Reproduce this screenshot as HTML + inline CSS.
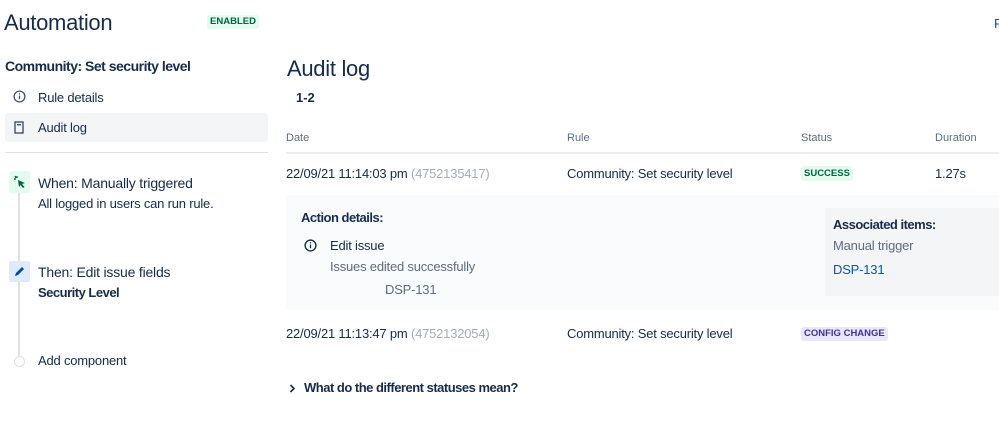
<!DOCTYPE html>
<html><head><meta charset="utf-8"><style>
*{margin:0;padding:0;box-sizing:border-box}
body{width:999px;height:424px;overflow:hidden;background:#fff;font-family:"Liberation Sans",sans-serif;color:#172b4d;position:relative}
.a{position:absolute;white-space:nowrap}
.t{font-size:13px;letter-spacing:-0.2px}
.g{color:#a5adba}
.b{font-weight:bold;letter-spacing:-0.5px}
</style></head><body>
<div class="a" style="left:4px;top:10px;font-size:22px;letter-spacing:-0.3px">Automation</div>
<div class="a" style="left:207px;top:15px;width:52px;height:14px;background:#e3fcef;color:#006644;font-size:9.5px;font-weight:bold;text-align:center;line-height:14px;border-radius:3px">ENABLED</div>
<div class="a" style="left:994px;top:16px;font-size:13px;color:#0052cc">R</div>

<div class="a" style="left:5px;top:58px;font-size:14px;font-weight:bold;letter-spacing:-0.5px;color:#172b4d">Community: Set security level</div>
<svg class="a" style="left:13px;top:90px" width="13" height="13" viewBox="0 0 14 14"><circle cx="7" cy="7" r="5.8" fill="none" stroke="#42526e" stroke-width="1.4"/><rect x="6.3" y="6" width="1.4" height="4" fill="#42526e"/><circle cx="7" cy="4.2" r=".8" fill="#42526e"/></svg>
<div class="a t" style="left:38px;top:90px">Rule details</div>
<div class="a" style="left:5px;top:113px;width:263px;height:29px;background:#f4f5f7;border-radius:3px"></div>
<svg class="a" style="left:14px;top:121px" width="10" height="13" viewBox="0 0 10 13"><rect x="1" y="1" width="8" height="11" fill="none" stroke="#42526e" stroke-width="1.4"/><rect x="3" y="3" width="4" height="1.4" fill="#42526e"/></svg>
<div class="a t" style="left:38px;top:120px">Audit log</div>
<div class="a" style="left:5px;top:152px;width:263px;height:1px;background:#dfe1e6"></div>

<div class="a" style="left:18px;top:193px;width:2px;height:163px;background:#dfe1e6"></div>
<div class="a" style="left:9px;top:171px;width:21px;height:22px;background:#e3fcef;border-radius:2px"></div>
<svg class="a" style="left:12px;top:175px" width="15" height="14" viewBox="0 0 15 14"><path d="M6 5 L13 8 L10 9 L12.5 12 L11 13 L8.5 10 L7 12 Z" fill="#006644"/><path d="M2 4 L4 4 M3 1 L4 3 M5 1 L5 3" stroke="#006644" stroke-width="1.3"/></svg>
<div class="a" style="left:38px;top:175px;font-size:14px;letter-spacing:-0.2px">When: Manually triggered</div>
<div class="a t" style="left:38px;top:196px">All logged in users can run rule.</div>
<div class="a" style="left:9px;top:261px;width:21px;height:21px;background:#deebff;border-radius:2px"></div>
<svg class="a" style="left:13px;top:265px" width="13" height="13" viewBox="0 0 13 13"><path d="M2 11 L3 8 L9 2 L11 4 L5 10 Z" fill="#0747a6"/></svg>
<div class="a" style="left:38px;top:264px;font-size:14px;letter-spacing:-0.2px">Then: Edit issue fields</div>
<div class="a t b" style="left:38px;top:285px">Security Level</div>
<div class="a" style="left:14px;top:356px;width:11px;height:11px;border:1px solid #dfe1e6;border-radius:50%;background:#fff"></div>
<div class="a t" style="left:38px;top:353px">Add component</div>

<div class="a" style="left:287px;top:56px;font-size:22px;letter-spacing:-0.3px">Audit log</div>
<div class="a" style="left:296px;top:90px;font-size:13px;font-weight:bold">1-2</div>
<div class="a" style="left:286px;top:132px;font-size:11px;color:#5e6c84">Date</div>
<div class="a" style="left:567px;top:132px;font-size:11px;color:#5e6c84">Rule</div>
<div class="a" style="left:801px;top:132px;font-size:11px;color:#5e6c84">Status</div>
<div class="a" style="left:935px;top:132px;font-size:11px;color:#5e6c84">Duration</div>
<div class="a" style="left:286px;top:152px;width:713px;height:2px;background:#ebecf0"></div>

<div class="a t" style="left:286px;top:166px">22/09/21 11:14:03 pm <span class="g">(4752135417)</span></div>
<div class="a t" style="left:567px;top:166px">Community: Set security level</div>
<div class="a" style="left:801px;top:166px;height:15px;padding:0 3px;background:#e3fcef;color:#006644;font-size:9.5px;font-weight:bold;line-height:15px;border-radius:3px">SUCCESS</div>
<div class="a t" style="left:935px;top:166px">1.27s</div>

<div class="a" style="left:286px;top:195px;width:713px;height:115px;background:#fafbfc"></div>
<div class="a t b" style="left:301px;top:210px">Action details:</div>
<svg class="a" style="left:304px;top:239px" width="13" height="13" viewBox="0 0 14 14"><circle cx="7" cy="7" r="5.8" fill="none" stroke="#172b4d" stroke-width="1.5"/><rect x="6.3" y="6" width="1.4" height="4" fill="#172b4d"/><circle cx="7" cy="4.2" r=".8" fill="#172b4d"/></svg>
<div class="a t" style="left:330px;top:238px">Edit issue</div>
<div class="a t" style="left:330px;top:259px;color:#5e6c84">Issues edited successfully</div>
<div class="a t" style="left:385px;top:282px;color:#5e6c84">DSP-131</div>
<div class="a" style="left:825px;top:208px;width:174px;height:88px;background:#f4f5f7"></div>
<div class="a t b" style="left:833px;top:217px">Associated items:</div>
<div class="a t" style="left:833px;top:238px;color:#5e6c84">Manual trigger</div>
<div class="a t" style="left:833px;top:262px;color:#0052cc">DSP-131</div>

<div class="a t" style="left:286px;top:326px">22/09/21 11:13:47 pm <span class="g">(4752132054)</span></div>
<div class="a t" style="left:567px;top:326px">Community: Set security level</div>
<div class="a" style="left:801px;top:327px;height:14px;padding:0 3px;background:#eae6ff;color:#403294;font-size:9.5px;font-weight:bold;line-height:14px;border-radius:3px">CONFIG CHANGE</div>

<svg class="a" style="left:289px;top:384px" width="7" height="9" viewBox="0 0 7 9"><path d="M1.5 1 L5 4.5 L1.5 8" fill="none" stroke="#172b4d" stroke-width="1.6"/></svg>
<div class="a t b" style="left:304px;top:380px">What do the different statuses mean?</div>
</body></html>
